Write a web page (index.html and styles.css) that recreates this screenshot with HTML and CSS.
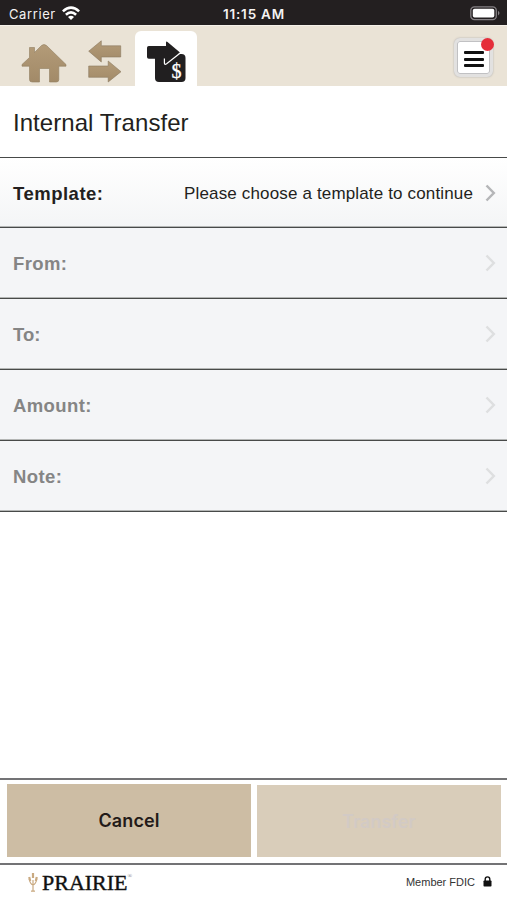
FILE: index.html
```html
<!DOCTYPE html>
<html lang="en">
<head>
<meta charset="utf-8">
<title>Internal Transfer</title>
<link rel="stylesheet" href="styles.css">
</head>
<body>
<div class="app">
  <div class="status">
    <div class="carrier"><span class="carrier-name">Carrier</span>
      <svg class="wifi" width="18" height="15" viewBox="0 0 18 15" fill="none" stroke="#fff" stroke-width="2.6"><path d="M.9 5.4Q9-2 17.1 5.4M3.9 8.7Q9 4.1 14.1 8.7"/><path d="M6 10.9Q9 8.5 12 10.9L9 14Z" fill="#fff" stroke="none"/></svg>
    </div>
    <span class="clock">11:15 AM</span>
    <svg class="battery" width="31" height="15" viewBox="0 0 31 15"><rect x=".8" y=".8" width="25.5" height="12.8" rx="3.6" fill="none" stroke="#858184" stroke-width="1.3"/><rect x="2.8" y="2.8" width="21.5" height="8.8" rx="1.8" fill="#fff"/><path d="M28 4.8q3 2.3 0 4.6z" fill="#858184"/></svg>
  </div>
  <nav class="tabs">
    <a class="tab"><svg width="46" height="42" viewBox="0 0 46 42"><defs><linearGradient id="tan" x1="0" y1="0" x2="0" y2="1"><stop offset="0" stop-color="#b39b78"/><stop offset="1" stop-color="#a28a68"/></linearGradient></defs><path d="M1 22.5 8.5 15.5V5.5H13.5V10.5L20.5 3.5Q23 1.5 25.5 3.5L45 22.5V24.2H37.8V37.5Q37.8 40 35.3 40H28.5V26.5H18.5V40H11.2Q8.5 40 8.5 37.5V24.2H1Z" fill="url(#tan)" stroke="#917d60" stroke-width=".6"/></svg></a>
    <a class="tab arrows"><svg width="34" height="43" viewBox="0 0 34 43"><g fill="url(#tan)" stroke="#897960" stroke-width=".6"><path d="M.7 11.2 13.3.8V5.8H32.7V17H13.3V22Z"/><path d="M.7 26H20.2V21L33 31.7 20.2 42V37.3H.7Z"/></g></svg></a>
    <a class="tab active"><svg width="39" height="42" viewBox="0 0 39 42"><rect x="8" y="13" width="30.5" height="28" rx="4" fill="#211f20"/><path d="M1.8 5H19V1.8Q19-.2 20.8 1.2L33 11.5 20.5 22.2Q18.2 24 17.8 21.5V17.7H1.8Q0 17.7 0 16V6.8Q0 5 1.8 5Z" fill="#211f20"/><path d="M17.4 17.5V22.2Q17.6 24.2 19.6 22.8L33.6 11.8" fill="none" stroke="#fff" stroke-width="1.2"/><text x="24.5" y="36.5" class="dollar">$</text></svg></a>
    <button class="menu" aria-label="Menu"><i></i><i></i><i></i><span class="badge"></span></button>
  </nav>
  <h1><span>Internal Transfer</span></h1>
  <main>
    <div class="row enabled"><b class="l-template">Template:</b><span class="value">Please choose a template to continue</span><svg class="chev" width="11" height="18" viewBox="0 0 11 18"><path d="M1.5 1.5 8.8 9 1.5 16.5"/></svg></div>
    <div class="row"><b>From:</b><svg class="chev" width="11" height="18" viewBox="0 0 11 18"><path d="M1.5 1.5 8.8 9 1.5 16.5"/></svg></div>
    <div class="row"><b class="l-to">To:</b><svg class="chev" width="11" height="18" viewBox="0 0 11 18"><path d="M1.5 1.5 8.8 9 1.5 16.5"/></svg></div>
    <div class="row"><b>Amount:</b><svg class="chev" width="11" height="18" viewBox="0 0 11 18"><path d="M1.5 1.5 8.8 9 1.5 16.5"/></svg></div>
    <div class="row"><b>Note:</b><svg class="chev" width="11" height="18" viewBox="0 0 11 18"><path d="M1.5 1.5 8.8 9 1.5 16.5"/></svg></div>
  </main>
  <div class="actions"><button class="cancel">Cancel</button><button class="submit" disabled>Transfer</button></div>
  <footer>
    <div class="brand"><svg width="10" height="19" viewBox="0 0 10 19" fill="none" stroke="#c9a980" stroke-width="1.2"><path d="M5 18V7M5 12Q2 11 1.2 6M5 12Q8 11 8.8 6M3 18.2H7"/><path d="M5 0V5M1.2 4 2.2 8M8.8 4 7.8 8" stroke-width="2.2"/></svg><span>PRAIRIE</span><sup>®</sup></div>
    <div class="fdic"><span>Member FDIC</span><svg width="9" height="11" viewBox="0 0 9 11"><path d="M2.2 5V3.2a2.3 2.3 0 0 1 4.6 0V5" fill="none" stroke="#111" stroke-width="1.4"/><rect x=".5" y="4.5" width="8" height="6" rx=".8" fill="#111"/></svg></div>
  </footer>
</div>
</body>
</html>
```
FILE: styles.css
```css
* { box-sizing: border-box; }
body { margin: 0; background: #fff; color: #231f20; font-family: "Liberation Sans", Arial, sans-serif; }
button { border: 0; margin: 0; padding: 0; font: inherit; color: inherit; border-radius: 0; }
svg { display: block; flex: none; }
.app { width: 507px; height: 900px; display: flex; flex-direction: column; overflow: hidden; }
.status { height: 25px; flex: none; background: #231f20; color: #f4f2f2; display: grid; grid-template-columns: 1fr auto 1fr; align-items: center; padding: 2px 6px 0 9px; font-family: Inter, sans-serif; }
.carrier { display: flex; align-items: center; gap: 6px; font-size: 13px; letter-spacing: .6px; }
.clock { font-size: 13.5px; font-weight: 600; letter-spacing: .8px; margin-right: 2px; }
.battery { justify-self: end; }
.tabs { height: 61px; flex: none; background: #eae3d6; border-top: 1px solid #f5f1e9; display: flex; align-items: flex-start; padding: 5px 14px 0 21px; }
.tab { display: block; padding-top: 11px; }
.arrows { margin-left: 21px; padding-top: 9px; }
.active { background: #fff; width: 62px; height: 55px; margin-left: 13px; padding: 10px 0 0 12px; border-radius: 6px 6px 0 0; }
.dollar { font: 20px "Liberation Serif", serif; fill: #fff; stroke: #fff; stroke-width: .3px; }
.menu { position: relative; width: 39px; height: 39px; margin: 7px 0 0 auto; padding-top: 3px; background: #fff; border: 3px solid #e2e1e0; border-radius: 6px; box-shadow: inset 0 0 0 1px #c1c1c3, 0 0 2px #aaa; display: flex; flex-direction: column; align-items: center; justify-content: center; gap: 3.5px; }
.menu i { width: 20px; height: 3px; border-radius: 1px; background: #111; }
.badge { position: absolute; right: -4px; top: -3px; width: 13px; height: 13px; border-radius: 50%; background: #e52e3a; }
h1 { height: 71px; flex: none; margin: 0; padding: 2px 13px 0; display: flex; align-items: center; font-size: 24px; font-weight: 400; letter-spacing: .05px; }
main { border-top: 1px solid #484a49; }
.row { height: 71px; border-bottom: 1px solid #484a49; box-shadow: inset 0 -1px #b4b6b5; background: #f4f5f7; color: #858585; display: flex; align-items: center; padding: 2px 11px 0 13px; }
.row b { font-size: 18.5px; letter-spacing: .4px; }
.row b.l-template { letter-spacing: .5px; }
.row b.l-to { letter-spacing: 0; }
.row.enabled { height: 70px; background: linear-gradient(#fff, #f4f5f6); color: #231f20; }
.value { margin-left: auto; font-size: 17px; letter-spacing: .15px; }
.chev { margin-left: auto; margin-top: -2px; fill: none; stroke: #dedfe0; stroke-width: 2.5; }
.value + .chev { margin-left: 12px; stroke: #b5b6b8; }
.actions { height: 85px; flex: none; margin-top: auto; border-top: 2px solid #737375; display: grid; grid-template-columns: 244px 244px; column-gap: 6px; padding: 4px 6px 6px 7px; font-family: Inter, sans-serif; font-weight: 600; font-size: 18px; }
.cancel { background: #cdbda4; color: #231a18; letter-spacing: .1px; }
.submit { background: #d9cdba; color: #d2cac5; margin-top: 1px; }
footer { height: 37px; flex: none; border-top: 2px solid #737375; display: flex; justify-content: space-between; align-items: center; padding: 0 15px 0 28px; }
.brand { display: flex; align-items: center; font-family: "Liberation Serif", serif; font-size: 22px; color: #111; }
.brand span { margin-left: 4px; -webkit-text-stroke: .4px #111; letter-spacing: 0; }
.brand sup { font-size: 6px; align-self: flex-start; margin-top: 3px; color: #777; }
.fdic { display: flex; align-items: center; gap: 8px; font-size: 11px; color: #333; margin-top: -2px; }
```
